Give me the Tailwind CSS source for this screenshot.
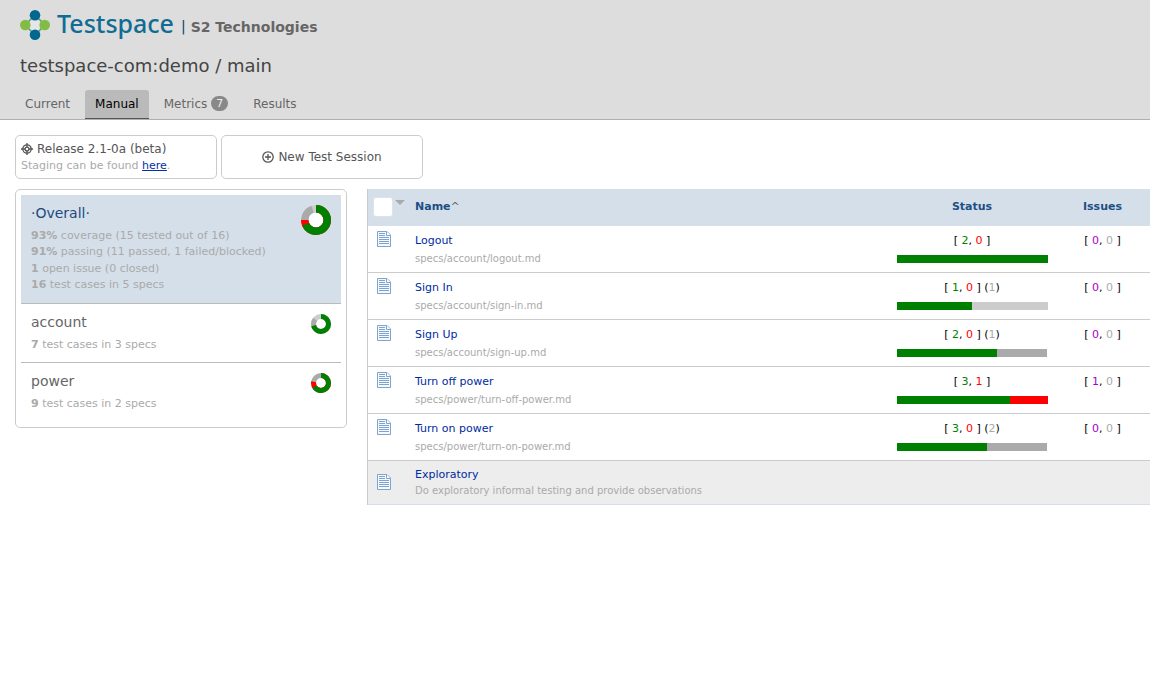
<!DOCTYPE html>
<html lang="en">
<head>
<meta charset="utf-8">
<title>Testspace - Manual</title>
<script src="https://cdn.jsdelivr.net/npm/@tailwindcss/browser@4"></script>
</head>
<body class="min-h-screen bg-white font-['Verdana','DejaVu_Sans',sans-serif] text-[11px] text-black">
<svg class="hidden" aria-hidden="true">
  <symbol id="doc" viewBox="0 0 14 16">
    <path d="M.5.5h9.500l3.500 3.500v11.500H.5z" fill="#f4f9fd" stroke="#7fa3cf"/>
    <path d="M9.500.5v4h4" fill="#fff" stroke="#7fa3cf"/>
    <path d="M2 2.500h6M2 4.500h6M2 6.500h10M2 8.500h10M2 10.500h10M2 12.500h10" stroke="#7fa3cf"/>
  </symbol>
</svg>
<header class="border-b border-[#b0b0b0] bg-[#dddddd]">
  <div class="flex h-[50px] items-center pl-5">
    <a href="#" class="flex items-center gap-[7px]" aria-label="Testspace">
      <svg class="size-[30px]" viewBox="0 0 30 30">
        <path d="M15 5 25 15 15 25 5 15z" fill="none" stroke="#5a9a85" stroke-width="1.500"/>
        <circle cx="15" cy="15" r="5.500" fill="#e6e6e8"/>
        <circle cx="5.300" cy="15" r="5.300" fill="#82bc45"/><circle cx="24.700" cy="15" r="5.300" fill="#82bc45"/>
        <circle cx="15" cy="5.300" r="5.300" fill="#00688f"/><circle cx="15" cy="24.700" r="5.300" fill="#00688f"/>
      </svg>
      <span class="pb-1 font-['Noto_Sans',sans-serif] text-[25px] leading-[30px] font-medium text-[#106c93]">Testspace</span>
    </a>
    <span class="ml-[7px] pt-0.5 text-[14px] text-[#003f6b]">|</span>
    <a href="#" class="ml-[5px] pt-1 text-[14px] font-bold text-[#666]">S2 Technologies</a>
  </div>
  <h1 class="pt-1 pl-5 text-[18px] leading-6 text-[#444]">testspace-com:demo / main</h1>
  <nav class="flex gap-[5px] pt-3 pl-[15px] text-[12px] text-[#666]">
    <a href="#" class="h-[29px] px-2.5 leading-[29px]">Current</a>
    <a href="#" class="h-[29px] rounded-t-[3px] border-b border-[#555] bg-[#bababa] px-2.5 leading-[29px] text-black">Manual</a>
    <a href="#" class="flex h-[29px] items-center gap-1 px-2.5 pb-0.5 leading-[29px]"><span class="pt-0.5">Metrics</span><span class="flex h-[15px] w-[17px] items-center justify-center rounded-full bg-[#888] text-[11px] leading-none text-[#eee]">7</span></a>
    <a href="#" class="h-[29px] px-2.5 leading-[29px]">Results</a>
  </nav>
</header>
<main class="pt-[15px] pl-[15px]">
  <div class="flex gap-1">
    <div class="h-11 w-[202px] rounded-[5px] border border-[#ccc] px-[5px] pt-[5px] text-[#aaa]">
      <h2 class="flex items-center gap-1 text-[12px] leading-4 text-[#555]">
        <svg class="size-3" viewBox="0 0 12 12" fill="none" stroke="#555" stroke-width="1.300"><circle cx="6" cy="6" r="4.200"/><circle cx="6" cy="6" r="1.900"/><path d="M6 0v4M6 8v4M0 6h4M8 6h4"/></svg>
        Release 2.1-0a (beta)
      </h2>
      <p class="leading-[18px]">Staging can be found <a href="#" class="text-[#0030a8] underline">here</a>.</p>
    </div>
    <button type="button" class="flex h-11 w-[202px] items-center justify-center gap-1 rounded-[5px] border border-[#ccc] text-[12px] text-[#555]">
      <svg class="size-3" viewBox="0 0 12 12" fill="none" stroke="#555" stroke-width="1.300"><circle cx="6" cy="6" r="5.200"/><path d="M6 3v6M3 6h6"/></svg>
      New Test Session
    </button>
  </div>
  <div class="mt-2.5 flex items-start gap-5">
    <aside class="w-[332px] shrink-0 rounded-[5px] border border-[#ccc] p-[5px] text-[#aaa]">
      <section class="flex h-[109px] justify-between border-b border-[#bbb] bg-[#d5dfe9] p-2.5">
        <div>
          <h3 class="pb-1.5 text-[14px] leading-4 text-[#1d4a80]">·Overall·</h3>
          <p class="leading-[17px]"><b>93%</b> coverage (15 tested out of 16)</p>
          <p class="leading-4"><b>91%</b> passing (11 passed, 1 failed/blocked)</p>
          <p class="leading-[17px]"><b>1</b> open issue (0 closed)</p>
          <p class="leading-4"><b>16</b> test cases in 5 specs</p>
        </div>
        <svg class="size-[30px]" viewBox="0 0 30 30"><g transform="rotate(-90 15 15)" fill="none" stroke-width="7.500">
          <circle cx="15" cy="15" r="15" fill="#fff" stroke="none"/>
          <circle cx="15" cy="15" r="11.250" stroke="#ccc"/>
          <circle cx="15" cy="15" r="11.250" stroke="#aaa" pathLength="16" stroke-dasharray="15.200 0.800"/>
          <circle cx="15" cy="15" r="11.250" stroke="red" pathLength="16" stroke-dasharray="12 4"/>
          <circle cx="15" cy="15" r="11.250" stroke="green" pathLength="16" stroke-dasharray="11 5"/></g></svg>
      </section>
      <section class="flex h-[59px] justify-between border-b border-[#bbb] p-2.5">
        <div>
          <h3 class="pb-1.5 text-[14px] leading-4 text-[#666]">account</h3>
          <p class="leading-[17px]"><b>7</b> test cases in 3 specs</p>
        </div>
        <svg class="size-5" viewBox="0 0 30 30"><g transform="rotate(-90 15 15)" fill="none" stroke-width="7.500">
          <circle cx="15" cy="15" r="11.250" stroke="#ccc"/>
          <circle cx="15" cy="15" r="11.250" stroke="#aaa" pathLength="7" stroke-dasharray="6 1"/>
          <circle cx="15" cy="15" r="11.250" stroke="green" pathLength="7" stroke-dasharray="5 2"/></g></svg>
      </section>
      <section class="flex h-[59px] justify-between p-2.5">
        <div>
          <h3 class="pb-1.5 text-[14px] leading-4 text-[#666]">power</h3>
          <p class="leading-[17px]"><b>9</b> test cases in 2 specs</p>
        </div>
        <svg class="size-5" viewBox="0 0 30 30"><g transform="rotate(-90 15 15)" fill="none" stroke-width="7.500">
          <circle cx="15" cy="15" r="11.250" stroke="#aaa"/>
          <circle cx="15" cy="15" r="11.250" stroke="red" pathLength="9" stroke-dasharray="7 2"/>
          <circle cx="15" cy="15" r="11.250" stroke="green" pathLength="9" stroke-dasharray="6 3"/></g></svg>
      </section>
    </aside>
    <div class="min-w-0 flex-1">
    <table class="w-full table-fixed border-separate border-spacing-0 border-l border-[#ccc]">
      <colgroup><col class="w-[47px]"><col><col class="w-[166px]"><col class="w-[95px]"></colgroup>
      <thead class="bg-[#d5dfe9] text-[#1d4f86]">
        <tr class="h-[37px]">
          <th class="p-0 pb-0.5 pl-[5px]"><span class="flex gap-0.5"><input type="checkbox" aria-label="Select all" class="size-5 appearance-none rounded-[3px] border border-[#dde3ea] bg-white"><svg class="mt-[3px] h-[5px] w-2.5" viewBox="0 0 10 5"><path d="M0 0h10L5 5z" fill="#aaa"/></svg></span></th>
          <th class="p-0 text-left"><a href="#">Name<span class="font-normal text-[#667]">^</span></a></th>
          <th class="p-0 text-center">Status</th>
          <th class="p-0 text-center">Issues</th>
        </tr>
      </thead>
      <tbody class="align-top [&_td]:border-b [&_td]:border-[#ccc]">
        <tr class="h-[47px]">
          <td class="pt-[5px] pl-[9px]"><svg class="h-4 w-3.5"><use href="#doc"/></svg></td>
          <td class="pt-1.5"><a href="#" class="block leading-[18px] text-[#002b9f]">Logout</a><p class="text-[10px] leading-[18px] text-[#aaa]">specs/account/logout.md</p></td>
          <td class="px-2 pt-1.5 text-center leading-[18px]">[ <span class="text-[green]">2</span>, <span class="text-[red]">0</span> ]<div class="mt-[5px] flex h-2 w-[151px]"><i class="flex-1 bg-[green]"></i></div></td>
          <td class="pt-1.5 text-center leading-[18px]">[ <span class="text-[#a0c]">0</span>, <span class="text-[#aaa]">0</span> ]</td>
        </tr>
        <tr class="h-[47px]">
          <td class="pt-[5px] pl-[9px]"><svg class="h-4 w-3.5"><use href="#doc"/></svg></td>
          <td class="pt-1.5"><a href="#" class="block leading-[18px] text-[#002b9f]">Sign In</a><p class="text-[10px] leading-[18px] text-[#aaa]">specs/account/sign-in.md</p></td>
          <td class="px-2 pt-1.5 text-center leading-[18px]">[ <span class="text-[green]">1</span>, <span class="text-[red]">0</span> ] (<span class="text-[#aaa]">1</span>)<div class="mt-[5px] flex h-2 w-[151px]"><i class="w-[75px] bg-[green]"></i><i class="flex-1 bg-[#ccc]"></i></div></td>
          <td class="pt-1.5 text-center leading-[18px]">[ <span class="text-[#a0c]">0</span>, <span class="text-[#aaa]">0</span> ]</td>
        </tr>
        <tr class="h-[47px]">
          <td class="pt-[5px] pl-[9px]"><svg class="h-4 w-3.5"><use href="#doc"/></svg></td>
          <td class="pt-1.5"><a href="#" class="block leading-[18px] text-[#002b9f]">Sign Up</a><p class="text-[10px] leading-[18px] text-[#aaa]">specs/account/sign-up.md</p></td>
          <td class="px-2 pt-1.5 text-center leading-[18px]">[ <span class="text-[green]">2</span>, <span class="text-[red]">0</span> ] (<span class="text-[#aaa]">1</span>)<div class="mt-[5px] flex h-2 w-[150px]"><i class="w-[100px] bg-[green]"></i><i class="flex-1 bg-[#aaa]"></i></div></td>
          <td class="pt-1.5 text-center leading-[18px]">[ <span class="text-[#a0c]">0</span>, <span class="text-[#aaa]">0</span> ]</td>
        </tr>
        <tr class="h-[47px]">
          <td class="pt-[5px] pl-[9px]"><svg class="h-4 w-3.5"><use href="#doc"/></svg></td>
          <td class="pt-1.5"><a href="#" class="block leading-[18px] text-[#002b9f]">Turn off power</a><p class="text-[10px] leading-[18px] text-[#aaa]">specs/power/turn-off-power.md</p></td>
          <td class="px-2 pt-1.5 text-center leading-[18px]">[ <span class="text-[green]">3</span>, <span class="text-[red]">1</span> ]<div class="mt-[5px] flex h-2 w-[151px]"><i class="w-[113px] bg-[green]"></i><i class="flex-1 bg-[red]"></i></div></td>
          <td class="pt-1.5 text-center leading-[18px]">[ <span class="text-[#a0c]">1</span>, <span class="text-[#aaa]">0</span> ]</td>
        </tr>
        <tr class="h-[47px]">
          <td class="pt-[5px] pl-[9px]"><svg class="h-4 w-3.5"><use href="#doc"/></svg></td>
          <td class="pt-1.5"><a href="#" class="block leading-[18px] text-[#002b9f]">Turn on power</a><p class="text-[10px] leading-[18px] text-[#aaa]">specs/power/turn-on-power.md</p></td>
          <td class="px-2 pt-1.5 text-center leading-[18px]">[ <span class="text-[green]">3</span>, <span class="text-[red]">0</span> ] (<span class="text-[#aaa]">2</span>)<div class="mt-[5px] flex h-2 w-[150px]"><i class="w-[90px] bg-[green]"></i><i class="flex-1 bg-[#aaa]"></i></div></td>
          <td class="pt-1.5 text-center leading-[18px]">[ <span class="text-[#a0c]">0</span>, <span class="text-[#aaa]">0</span> ]</td>
        </tr>
      </tbody>
      <tfoot class="bg-[#ededed] align-top [&_td]:border-b [&_td]:border-[#d5dfe9]">
        <tr class="h-11">
          <td class="pt-[13px] pl-[9px]"><svg class="h-4 w-3.5"><use href="#doc"/></svg></td>
          <td colspan="3" class="pt-1.5"><a href="#" class="block leading-4 text-[#002b9f]">Exploratory</a><p class="text-[10px] leading-4 text-[#aaa]">Do exploratory informal testing and provide observations</p></td>
        </tr>
      </tfoot>
    </table>
    </div>
  </div>
</main>
</body>
</html>
